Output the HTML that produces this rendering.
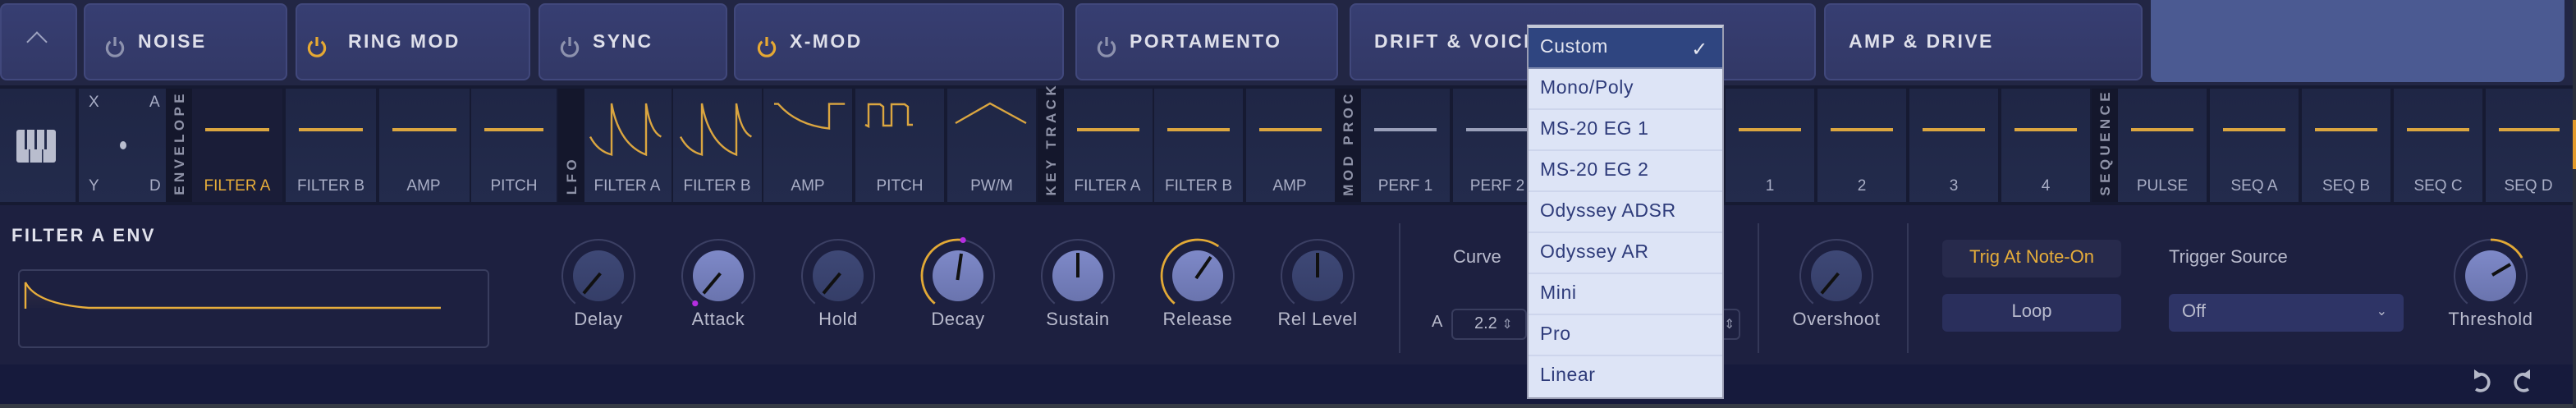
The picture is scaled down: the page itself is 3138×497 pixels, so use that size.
<!DOCTYPE html>
<html><head><meta charset="utf-8"><style>
*{margin:0;padding:0;box-sizing:border-box}
html,body{width:3138px;height:497px;overflow:hidden;background:#1b1e3c}
#w{position:absolute;left:0;top:0;width:1569px;height:248.5px;transform:scale(2);transform-origin:0 0;font-family:"Liberation Sans",sans-serif;background:#1d2040;overflow:hidden}
.a{position:absolute}
.btn{position:absolute;top:2px;height:47px;background:linear-gradient(#373e72,#323866);border:1px solid #41487c;border-radius:4px}
.bt{position:absolute;top:17px;font-weight:bold;font-size:11.5px;letter-spacing:1.2px;color:#dedfea}
.pw{position:absolute;top:19px}
.cell{position:absolute;top:53.5px;height:69.5px;background:linear-gradient(#1f2645,#232b4c)}
.cl{position:absolute;bottom:4px;left:0;right:0;text-align:center;font-size:9.5px;color:#a9aec6}
.ln{position:absolute;top:24.5px;left:8px;right:8px;height:1.6px;background:#dba640}
.vs{position:absolute;top:53.5px;height:69.5px;width:16px;background:#14172c}
.vt{position:absolute;left:3px;bottom:4px;writing-mode:vertical-rl;transform:rotate(180deg);white-space:nowrap;font-weight:bold;font-size:8.5px;letter-spacing:2.2px;color:#8f93a8;line-height:10px}
.kl{position:absolute;top:189px;width:80px;text-align:center;font-size:11px;color:#b9bbcd;letter-spacing:.3px}
.dd{position:absolute;left:930px;top:15px;width:119.5px;height:228px;background:#dde4f6;border:1px solid #9a9db2;border-top:2.5px solid #c3c7d6}
.it{height:25px;border-bottom:1px solid #cdd5ec;font-size:11.5px;color:#2e3b7a;padding:6px 0 0 7px;letter-spacing:.3px}
</style></head><body><div id="w">
<div class="a" style="left:0;top:0;width:1569px;height:52px;background:#222644"></div>
<div class="btn" style="left:0;width:46.5px"><div class="a" style="left:17px;top:18px;width:9px;height:9px;border-left:1.8px solid #9ea3c0;border-top:1.8px solid #9ea3c0;transform:rotate(45deg)"></div></div>
<div class="btn" style="left:51px;width:124px"><svg class="pw" style="left:12px" width="12" height="13" viewBox="0 0 12 13"><path d="M3.2 3.4A4.8 4.8 0 1 0 8.8 3.4" fill="none" stroke="#8d92ae" stroke-width="1.6"/><path d="M6 0.5V6" stroke="#8d92ae" stroke-width="1.6"/></svg><span class="bt" style="left:32px">NOISE</span></div>
<div class="btn" style="left:180px;width:143px"><svg class="pw" style="left:6px" width="12" height="13" viewBox="0 0 12 13"><path d="M3.2 3.4A4.8 4.8 0 1 0 8.8 3.4" fill="none" stroke="#e6a933" stroke-width="1.6"/><path d="M6 0.5V6" stroke="#e6a933" stroke-width="1.6"/></svg><span class="bt" style="left:31px">RING MOD</span></div>
<div class="btn" style="left:328px;width:114.5px"><svg class="pw" style="left:12px" width="12" height="13" viewBox="0 0 12 13"><path d="M3.2 3.4A4.8 4.8 0 1 0 8.8 3.4" fill="none" stroke="#8d92ae" stroke-width="1.6"/><path d="M6 0.5V6" stroke="#8d92ae" stroke-width="1.6"/></svg><span class="bt" style="left:32px">SYNC</span></div>
<div class="btn" style="left:447px;width:201px"><svg class="pw" style="left:13px" width="12" height="13" viewBox="0 0 12 13"><path d="M3.2 3.4A4.8 4.8 0 1 0 8.8 3.4" fill="none" stroke="#e6a933" stroke-width="1.6"/><path d="M6 0.5V6" stroke="#e6a933" stroke-width="1.6"/></svg><span class="bt" style="left:33px">X-MOD</span></div>
<div class="btn" style="left:655px;width:160px"><svg class="pw" style="left:12px" width="12" height="13" viewBox="0 0 12 13"><path d="M3.2 3.4A4.8 4.8 0 1 0 8.8 3.4" fill="none" stroke="#8d92ae" stroke-width="1.6"/><path d="M6 0.5V6" stroke="#8d92ae" stroke-width="1.6"/></svg><span class="bt" style="left:32px">PORTAMENTO</span></div>
<div class="btn" style="left:822px;width:284px"><span class="bt" style="left:14px">DRIFT &amp; VOICE</span></div>
<div class="btn" style="left:1111px;width:194px"><span class="bt" style="left:14px">AMP &amp; DRIVE</span></div>
<div class="a" style="left:1310px;top:0;width:252px;height:49.5px;background:#4b5a92;border-radius:0 0 4px 4px"></div>
<div class="a" style="left:0;top:52px;width:1569px;height:73px;background:#161a32"></div>
<div class="cell" style="left:0;width:45.5px"><svg class="a" style="left:10px;top:25px" width="24" height="20" viewBox="0 0 24 20"><rect x="0" y="0" width="24" height="20" rx="1.5" fill="#b9bdce"/><rect x="5" y="0" width="1.5" height="12" fill="#232b4c"/><rect x="11" y="0" width="1.5" height="12" fill="#232b4c"/><rect x="17" y="0" width="1.5" height="12" fill="#232b4c"/><rect x="7.5" y="12" width="0.8" height="8" fill="#232b4c"/><rect x="15.5" y="12" width="0.8" height="8" fill="#232b4c"/></svg></div>
<div class="cell" style="left:48px;width:53px"><span class="a" style="left:6px;top:3px;font-size:9.5px;color:#a9aec6">X</span><span class="a" style="left:43px;top:3px;font-size:9.5px;color:#a9aec6">A</span><span class="a" style="left:6px;bottom:4px;font-size:9.5px;color:#a9aec6">Y</span><span class="a" style="left:43px;bottom:4px;font-size:9.5px;color:#a9aec6">D</span><div class="a" style="left:25px;top:32px;width:4px;height:5px;border-radius:50%;background:#b9bdce"></div></div>
<div class="vs" style="left:101px"><span class="vt">ENVELOPE</span></div>
<div class="cell" style="left:117px;width:55px;background:#1a1d38"><div class="ln"></div><div class="cl" style="color:#e6ad3a">FILTER A</div></div>
<div class="cell" style="left:174px;width:55px"><div class="ln"></div><div class="cl">FILTER B</div></div>
<div class="cell" style="left:230.5px;width:55px"><div class="ln"></div><div class="cl">AMP</div></div>
<div class="cell" style="left:287px;width:52px"><div class="ln"></div><div class="cl">PITCH</div></div>
<div class="vs" style="left:339.5px"><span class="vt">LFO</span></div>
<div class="cell" style="left:355.5px;width:53px"><div class="cl">FILTER A</div></div>
<div class="cell" style="left:410px;width:53.5px"><div class="cl">FILTER B</div></div>
<div class="cell" style="left:465px;width:54px"><div class="cl">AMP</div></div>
<div class="cell" style="left:521px;width:54px"><div class="cl">PITCH</div></div>
<div class="cell" style="left:577px;width:54px"><div class="cl">PW/M</div></div>
<svg class="a" style="left:0;top:0" width="640" height="100"><g fill="none" stroke="#dba640" stroke-width="1.2"><path d="M359.5 83.3Q364 92 372.5 94.2V63Q377 88 393.5 94.2V63Q396 80 402.7 83.3"/><path d="M414.5 83.3Q419 92 427.5 94.2V63Q432 88 448.5 94.2V63Q451 80 457.7 83.3"/><path d="M471.5 63.3H474Q485 76 505 78.3V63.3H514.6"/><path d="M527 76L529 77V63.5H536L538 65V76.5H543V63.5H551L553 65V76H556"/><path d="M582 75L603 63L625 75"/></g></svg>
<div class="vs" style="left:631.5px"><span class="vt">KEY TRACK</span></div>
<div class="cell" style="left:647.5px;width:54px"><div class="ln"></div><div class="cl">FILTER A</div></div>
<div class="cell" style="left:703px;width:54px"><div class="ln"></div><div class="cl">FILTER B</div></div>
<div class="cell" style="left:758.5px;width:54px"><div class="ln"></div><div class="cl">AMP</div></div>
<div class="vs" style="left:812.5px"><span class="vt">MOD PROC</span></div>
<div class="cell" style="left:829px;width:54px"><div class="ln" style="background:#9aa0ba"></div><div class="cl">PERF 1</div></div>
<div class="cell" style="left:885px;width:54px"><div class="ln" style="background:#9aa0ba"></div><div class="cl">PERF 2</div></div>
<div class="cell" style="left:940.5px;width:54px"><div class="ln"></div></div>
<div class="cell" style="left:996px;width:54px"><div class="ln"></div></div>
<div class="cell" style="left:1051px;width:54px"><div class="ln"></div><div class="cl">1</div></div>
<div class="cell" style="left:1107px;width:54px"><div class="ln"></div><div class="cl">2</div></div>
<div class="cell" style="left:1163px;width:54px"><div class="ln"></div><div class="cl">3</div></div>
<div class="cell" style="left:1219px;width:54px"><div class="ln"></div><div class="cl">4</div></div>
<div class="vs" style="left:1273.5px"><span class="vt">SEQUENCE</span></div>
<div class="cell" style="left:1290px;width:54px"><div class="ln"></div><div class="cl">PULSE</div></div>
<div class="cell" style="left:1346px;width:54px"><div class="ln"></div><div class="cl">SEQ A</div></div>
<div class="cell" style="left:1402px;width:54px"><div class="ln"></div><div class="cl">SEQ B</div></div>
<div class="cell" style="left:1458px;width:54px"><div class="ln"></div><div class="cl">SEQ C</div></div>
<div class="cell" style="left:1513.5px;width:53px"><div class="ln"></div><div class="cl">SEQ D</div></div>
<div class="a" style="left:0;top:222px;width:1569px;height:23.5px;background:#161a3c"></div>
<div class="a" style="left:0;top:245.5px;width:1569px;height:3px;background:#363b45"></div>
<div class="a" style="left:1566.5px;top:0;width:2.5px;height:248.5px;background:#2b2f3c"></div>
<div class="a" style="left:1567px;top:73px;width:2px;height:30px;background:#e39a2a"></div>
<div class="a" style="left:7px;top:138px;font-weight:bold;font-size:11px;letter-spacing:1.2px;color:#e0e1ec">FILTER A ENV</div>
<div class="a" style="left:11px;top:163.5px;width:287px;height:48px;border:1px solid #393d5e;border-radius:3px"></div>
<svg class="a" style="left:0;top:0" width="300" height="220"><defs><linearGradient id="g" x1="0" y1="0" x2="0" y2="1"><stop offset="0" stop-color="#4a4048" stop-opacity=".6"/><stop offset="1" stop-color="#2a2840" stop-opacity=".2"/></linearGradient></defs><path d="M15.5 172Q22 185 54 187.5L15.5 187.5Z" fill="url(#g)"/><path d="M15.5 188V172Q22 185 54 187.5H268.5" fill="none" stroke="#e8ae3c" stroke-width="1.2"/></svg>
<svg class="a" style="left:0;top:0" width="1569" height="248" viewBox="0 0 1569 248"><defs>
<linearGradient id="kl" x1="0" y1="0" x2="0" y2="1"><stop offset="0" stop-color="#7e89c8"/><stop offset="1" stop-color="#6a74ae"/></linearGradient>
<linearGradient id="kd" x1="0" y1="0" x2="0" y2="1"><stop offset="0" stop-color="#3e4876"/><stop offset="1" stop-color="#353e68"/></linearGradient>
<g id="ring"><path d="M-14.14 16.85A22 22 0 1 1 14.14 16.85" fill="none" stroke="#3c4064" stroke-width="1"/></g>
</defs>
<g transform="translate(364.5,168)"><use href="#ring"/><circle r="15.5" fill="url(#kd)"/><path d="M1.2 -1.5L-9 10.7" stroke="#111" stroke-width="2"/></g>
<g transform="translate(437.5,168)"><use href="#ring"/><circle r="15.5" fill="url(#kl)"/><path d="M1.2 -1.5L-9 10.7" stroke="#111" stroke-width="2"/><circle cx="-14.1" cy="16.8" r="1.8" fill="#b52ee0"/></g>
<g transform="translate(510.5,168)"><use href="#ring"/><circle r="15.5" fill="url(#kd)"/><path d="M1.2 -1.5L-9 10.7" stroke="#111" stroke-width="2"/></g>
<g transform="translate(583.5,168)"><use href="#ring"/><path d="M-14.14 16.85A22 22 0 0 1 3.06 -21.79" fill="none" stroke="#e2a936" stroke-width="1.4"/><circle r="15.5" fill="url(#kl)"/><path d="M-0.3 2.5L2 -13.5" stroke="#111" stroke-width="2"/><circle cx="3.06" cy="-21.79" r="1.8" fill="#b52ee0"/></g>
<g transform="translate(656.5,168)"><use href="#ring"/><circle r="15.5" fill="url(#kl)"/><path d="M0 1V-14" stroke="#111" stroke-width="2"/></g>
<g transform="translate(729.5,168)"><use href="#ring"/><path d="M-14.14 16.85A22 22 0 0 1 12.62 -18.02" fill="none" stroke="#e2a936" stroke-width="1.4"/><circle r="15.5" fill="url(#kl)"/><path d="M-1 1.5L8 -11.5" stroke="#111" stroke-width="2"/></g>
<g transform="translate(802.5,168)"><use href="#ring"/><circle r="15.5" fill="url(#kd)"/><path d="M0 1V-14" stroke="#111" stroke-width="2"/></g>
<g transform="translate(1118.5,168)"><use href="#ring"/><circle r="15.5" fill="url(#kd)"/><path d="M1.2 -1.5L-9 10.7" stroke="#111" stroke-width="2"/></g>
<g transform="translate(1517,168)"><use href="#ring"/><path d="M0 -22A22 22 0 0 1 19.05 -11" fill="none" stroke="#e2a936" stroke-width="1.4"/><circle r="15.5" fill="url(#kl)"/><path d="M1 -0.5L12 -7" stroke="#111" stroke-width="2"/></g>
<path d="M852.5 136V215M1071 136V215M1162 136V215" stroke="#343858" stroke-width="1"/>
</svg>
<div class="kl" style="left:324.5px">Delay</div>
<div class="kl" style="left:397.5px">Attack</div>
<div class="kl" style="left:470.5px">Hold</div>
<div class="kl" style="left:543.5px">Decay</div>
<div class="kl" style="left:616.5px">Sustain</div>
<div class="kl" style="left:689.5px">Release</div>
<div class="kl" style="left:762.5px">Rel Level</div>
<div class="kl" style="left:1078.5px">Overshoot</div>
<div class="kl" style="left:1477px">Threshold</div>
<div class="a" style="left:885px;top:151px;font-size:11px;color:#b9bbcd">Curve</div>
<div class="a" style="left:872px;top:191px;font-size:10px;color:#b9bbcd">A</div>
<div class="a" style="left:884px;top:187.5px;width:46px;height:19px;border:1px solid #393d5e;border-radius:3px;font-size:10px;color:#b9bbcd;padding:3px 0 0 13px">2.2 <span style="font-size:8px;color:#8e92aa">&#8661;</span></div>
<div class="a" style="left:1040px;top:187.5px;width:20px;height:19px;border:1px solid #393d5e;border-radius:3px;font-size:8px;color:#8e92aa;padding:4px 0 0 9px">&#8661;</div>
<div class="a" style="left:1183px;top:146px;width:109px;height:23px;background:#272a4c;border-radius:3px;text-align:center;font-size:11px;color:#e6ad3a;line-height:23px">Trig At Note-On</div>
<div class="a" style="left:1183px;top:179px;width:109px;height:22.5px;background:#2a2f5c;border-radius:3px;text-align:center;font-size:11px;color:#b9bbcd;line-height:22.5px">Loop</div>
<div class="a" style="left:1321px;top:151px;font-size:11px;color:#b9bbcd">Trigger Source</div>
<div class="a" style="left:1321px;top:179px;width:143px;height:22.5px;background:#2e3466;border-radius:3px;font-size:11px;color:#b9bbcd;line-height:22.5px;padding-left:8px">Off<span class="a" style="right:10px;top:0;font-size:8px">&#8964;</span></div>
<svg class="a" style="left:1500px;top:224px" width="50" height="16" viewBox="0 0 50 16"><g fill="none" stroke="#b4b8c8" stroke-width="1.8"><path d="M10 4A5 5 0 1 1 8 13"/><path d="M38 4A5 5 0 1 0 40 13"/></g><path d="M7 1L12 4.5L7 7Z" fill="#b4b8c8"/><path d="M41 1L36 4.5L41 7Z" fill="#b4b8c8"/></svg>
<div class="dd">
<div class="it" style="background:#2f4580;color:#e4e6f0;border-bottom:1px solid #7f8bb0;height:24.5px">Custom<span style="float:right;margin-right:8px;font-size:12px">&#10003;</span></div>
<div class="it">Mono/Poly</div>
<div class="it">MS-20 EG 1</div>
<div class="it">MS-20 EG 2</div>
<div class="it">Odyssey ADSR</div>
<div class="it">Odyssey AR</div>
<div class="it">Mini</div>
<div class="it">Pro</div>
<div class="it" style="border-bottom:none">Linear</div>
</div>
</div></body></html>
